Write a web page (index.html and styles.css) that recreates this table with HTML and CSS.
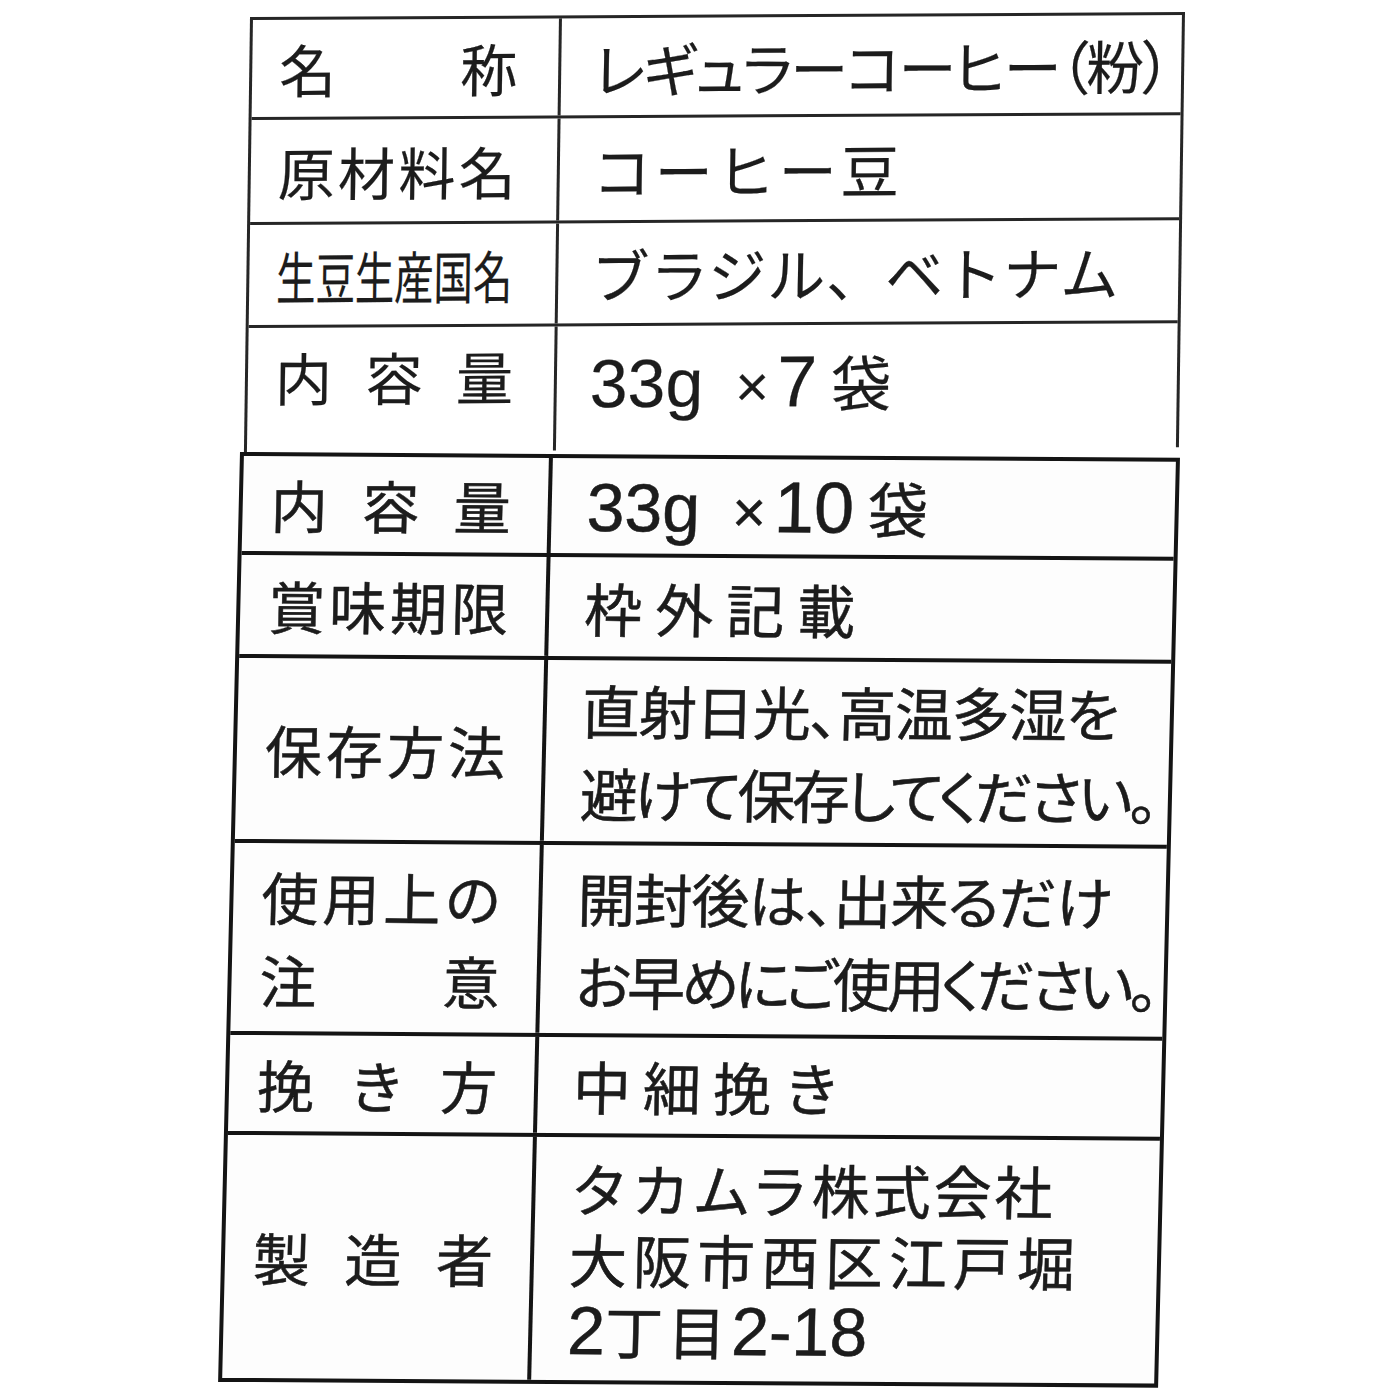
FILE: index.html
```html
<!DOCTYPE html>
<html lang="ja">
<head>
<meta charset="utf-8">
<title>表示</title>
<link rel="stylesheet" href="styles.css">
</head>
<body>
<div class="page">
  <div class="label label-top">
    <div class="row r1">
      <div class="key"><div class="just"><span>名</span><span>称</span></div></div>
      <div class="val v-name">レギュラーコーヒー（粉）</div>
    </div>
    <div class="row r2">
      <div class="key"><div class="just"><span>原</span><span>材</span><span>料</span><span>名</span></div></div>
      <div class="val v-bean">コーヒー豆</div>
    </div>
    <div class="row r3">
      <div class="key"><span class="cond">生豆生産国名</span></div>
      <div class="val v-origin">ブラジル、ベトナム</div>
    </div>
    <div class="row r4">
      <div class="key"><div class="just"><span>内</span><span>容</span><span>量</span></div></div>
      <div class="val"><div class="qty"><span class="lat">33g</span><span class="times">×</span><span class="lat num">7</span><span class="bag">袋</span></div></div>
    </div>
  </div>

  <div class="label label-bottom">
    <div class="row s1">
      <div class="key"><div class="just"><span>内</span><span>容</span><span>量</span></div></div>
      <div class="val"><div class="qty"><span class="lat">33g</span><span class="times">×</span><span class="lat num">10</span><span class="bag">袋</span></div></div>
    </div>
    <div class="row s2">
      <div class="key"><div class="just"><span>賞</span><span>味</span><span>期</span><span>限</span></div></div>
      <div class="val v-exp">枠外記載</div>
    </div>
    <div class="row s3">
      <div class="key"><div class="just"><span>保</span><span>存</span><span>方</span><span>法</span></div></div>
      <div class="val multi"><div class="l-a">直射日光、高温多湿を</div><div class="l-b">避けて保存してください。</div></div>
    </div>
    <div class="row s4">
      <div class="key two">
        <div class="just"><span>使</span><span>用</span><span>上</span><span>の</span></div>
        <div class="just"><span>注</span><span>意</span></div>
      </div>
      <div class="val multi"><div class="l-c">開封後は、出来るだけ</div><div class="l-d">お早めにご使用ください。</div></div>
    </div>
    <div class="row s5">
      <div class="key"><div class="just"><span>挽</span><span>き</span><span>方</span></div></div>
      <div class="val v-grind">中細挽き</div>
    </div>
    <div class="row s6">
      <div class="key key-maker"><div class="just"><span>製</span><span>造</span><span>者</span></div></div>
      <div class="val maker"><div class="m1">タカムラ株式会社</div><div class="m2">大阪市西区江戸堀</div><div class="m3"><span class="lat">2</span>丁目<span class="lat">2-18</span></div></div>
    </div>
  </div>
</div>
</body>
</html>
```

FILE: styles.css
```css
* { box-sizing: border-box; }

html, body {
  margin: 0;
  padding: 0;
  background: #ffffff;
}

body {
  width: 1400px;
  height: 1400px;
  overflow: hidden;
  font-family: "Noto Sans CJK JP", "Noto Sans", sans-serif;
  font-weight: 400;
  color: #1c1c1c;
}

.page {
  padding-top: 17px;
}

.label {
  transform-origin: 0 0;
}

.label-top {
  margin-left: 250px;
  width: 935px;
  border: 3px solid #262626;
  border-bottom: none;
  transform: rotate(-0.3deg) skewX(-1.1deg);
  -webkit-text-stroke: 0.2px #1c1c1c;
}

.label-bottom {
  margin-left: 240px;
  width: 940px;
  border: 4px solid #141414;
  transform: rotate(0.35deg) skewX(-1deg);
  background: #fdfdfd;
  -webkit-text-stroke: 0.5px #161616;
}

.row {
  display: grid;
  grid-template-columns: 309px 1fr;
}

.label-top .row { border-bottom: 3px solid #262626; }
.label-top .row.r4 { border-bottom: none; }
.label-bottom .row { border-bottom: 4px solid #141414; }
.label-bottom .row.s6 { border-bottom: none; }

.key {
  display: flex;
  flex-direction: column;
  justify-content: center;
  font-size: 57px;
  line-height: 1;
  white-space: nowrap;
}

.label-top .key {
  border-right: 3px solid #262626;
  padding: 0 41px 0 27px;
}

.label-bottom .key {
  border-right: 4px solid #141414;
  padding: 0 37px 0 28px;
}

.just {
  display: flex;
  justify-content: space-between;
  width: 100%;
}

.cond {
  display: inline-block;
  transform: scaleX(0.69);
  transform-origin: 0 50%;
}

.val {
  display: flex;
  flex-direction: column;
  justify-content: center;
  font-size: 58px;
  line-height: 1;
  white-space: nowrap;
}

.label-top .val { padding-left: 33px; }
.label-bottom .val { padding-left: 35px; }

.r1 { height: 100px; }
.r2 { height: 105px; }
.r3 { height: 103px; }
.r4 { height: 124px; }
.r4 .key, .r4 .val { justify-content: flex-start; padding-top: 20px; }

.s1 { height: 99px; }
.s2 { height: 103px; }
.s3 { height: 185px; }
.s4 { height: 192px; }
.s5 { height: 100px; }
.s6 { height: 243px; }

.v-name { font-feature-settings: "palt"; letter-spacing: -2px; }
.v-bean { letter-spacing: 4px; }
.v-origin { letter-spacing: 1px; }
.v-exp { letter-spacing: 13px; }
.v-grind { letter-spacing: 12px; }

.lat {
  font-family: "Liberation Sans", "Noto Sans CJK JP", sans-serif;
  font-size: 68px;
  letter-spacing: 0;
}

.qty {
  display: flex;
  align-items: baseline;
}

.qty .num {
  font-size: 72px;
  margin-right: 14px;
}

.bag {
  font-size: 60px;
}

.times {
  font-family: "Liberation Sans", sans-serif;
  font-size: 58px;
  margin: 0 8px 0 32px;
}

.multi { line-height: 83px; }
.l-a { font-feature-settings: "palt"; letter-spacing: -1px; }
.l-b { font-feature-settings: "palt"; letter-spacing: -3.5px; }
.l-c { font-feature-settings: "palt"; letter-spacing: -1px; }
.l-d { font-feature-settings: "palt"; letter-spacing: -4px; }

.two { line-height: 83px; }
.two .just { height: 83px; align-items: center; }

.maker { line-height: 71px; }
.m1 { letter-spacing: 3px; }
.m2 { letter-spacing: 6px; }
.m3 { letter-spacing: 5px; }
```
